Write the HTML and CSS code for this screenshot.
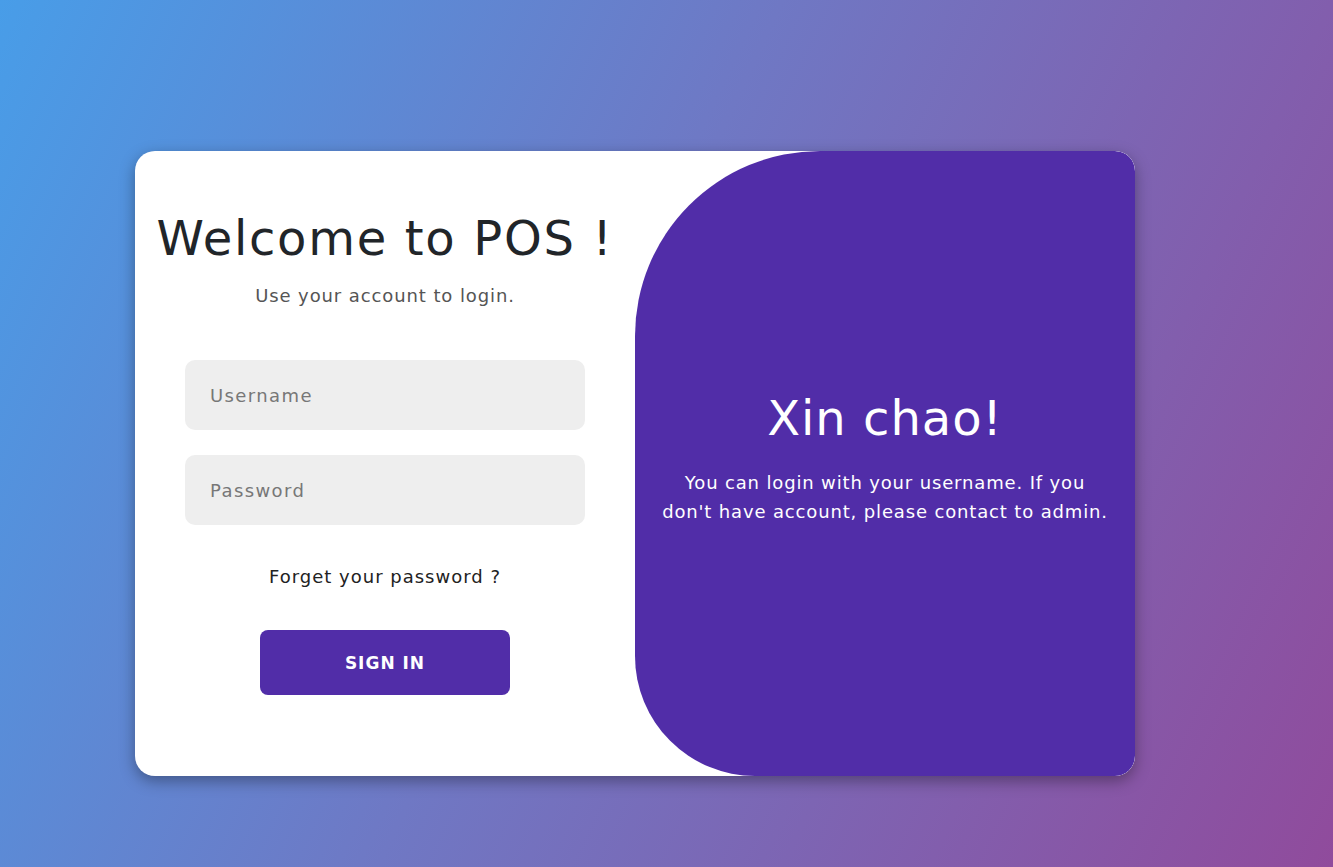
FILE: index.html
```html
<!DOCTYPE html>
<html lang="en">
<head>
<meta charset="utf-8">
<title>POS Login</title>
<link rel="stylesheet" href="styles.css">
</head>
<body>
  <div class="card">
    <form class="sign-in">
      <h1 class="title">Welcome to POS !</h1>
      <p class="subtitle">Use your account to login.</p>
      <input class="field field-first" type="text" placeholder="Username">
      <input class="field" type="password" placeholder="Password">
      <a class="forget" href="#">Forget your password ?</a>
      <button class="btn" type="button">Sign In</button>
    </form>
    <div class="toggle">
      <h1 class="toggle-title">Xin chao!</h1>
      <p class="toggle-text">You can login with your username. If you don't have account, please contact to admin.</p>
    </div>
  </div>
</body>
</html>
```
FILE: styles.css
```css
* { box-sizing: border-box; }
html, body { margin: 0; height: 100%; }
body {
  background: linear-gradient(115deg, #489de8 0%, #6f78c4 45%, #904b9c 100%);
  font-family: "DejaVu Sans", "Open Sans", sans-serif;
  padding: 151px 0 0 135px;
}
.card {
  width: 1000px;
  height: 625px;
  background: #fff;
  border-radius: 20px;
  box-shadow: 0 5px 15px rgba(0, 0, 0, 0.35);
  display: flex;
  overflow: hidden;
}
.sign-in {
  width: 500px;
  display: flex;
  flex-direction: column;
  align-items: center;
  padding-top: 58px;
}
.title {
  margin: 0;
  font-size: 48px;
  font-weight: 400;
  line-height: 58px;
  color: #212529;
  letter-spacing: 1.7px;
}
.subtitle {
  margin: 17px 0 0;
  font-size: 18px;
  line-height: 24px;
  color: #555;
  letter-spacing: 0.9px;
}
.field {
  width: 400px;
  height: 70px;
  border: none;
  border-radius: 10px;
  background: #eee;
  padding: 0 25px;
  font-family: inherit;
  font-size: 18px;
  color: #333;
  margin-top: 25px;
  outline: none;
  letter-spacing: 1.4px;
}
.field-first { margin-top: 52px; }
.field::placeholder { color: #777; }
.forget {
  margin-top: 40px;
  font-size: 18px;
  line-height: 24px;
  color: #222;
  text-decoration: none;
  letter-spacing: 1px;
}
.btn {
  margin-top: 41px;
  width: 250px;
  height: 65px;
  border: none;
  border-radius: 8px;
  background: #512da8;
  color: #fff;
  font-family: inherit;
  font-size: 17px;
  font-weight: 700;
  text-transform: uppercase;
  letter-spacing: 1px;
}
.toggle {
  width: 500px;
  background: #512da8;
  border-radius: 185px 20px 20px 120px;
  color: #fff;
  display: flex;
  flex-direction: column;
  align-items: center;
  justify-content: center;
  text-align: center;
  padding: 0 24px 12px;
}
.toggle-title {
  margin: 0;
  font-size: 48px;
  font-weight: 400;
  line-height: 58px;
  letter-spacing: 1px;
}
.toggle-text {
  margin: 21px 0 0;
  font-size: 18px;
  line-height: 29px;
  letter-spacing: 0.85px;
}
```
